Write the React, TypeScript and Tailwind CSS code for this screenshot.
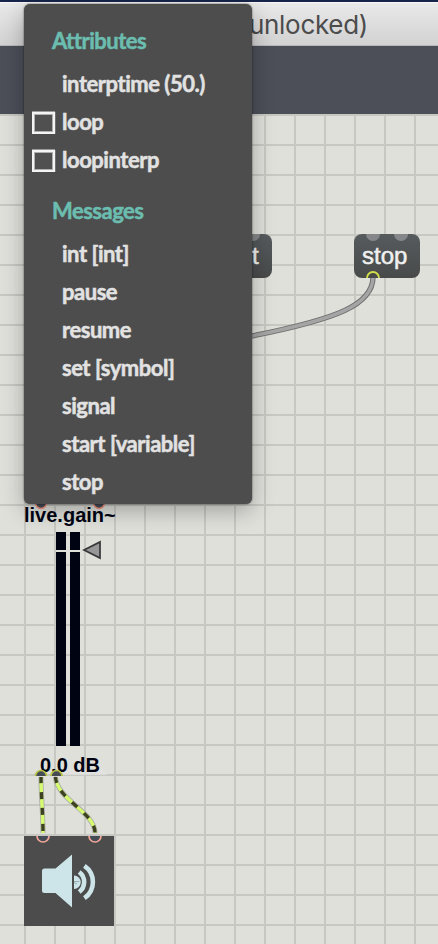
import type { ReactNode } from "react";

function Header({ children, first = false }: { children: ReactNode; first?: boolean }) {
  return (
    <h2 className={`${first ? "h-[61px] pt-[24px]" : "h-[56px] pt-[19px]"} pl-7 text-[22px] leading-[26px] font-bold tracking-[-0.5px] text-[#6bbdb0] [-webkit-text-stroke:0.5px_#6bbdb0]`}>
      {children}
    </h2>
  );
}

function Item({ label, checkbox = false }: { label: string; checkbox?: boolean }) {
  return (
    <li className="flex h-[38px] items-center text-[22px] font-bold tracking-[-0.47px] text-[#e2e2e2]">
      <span className="flex w-[38px] shrink-0 pt-px pl-2">
        {checkbox && <span className="h-[22px] w-[23px] border-2 border-[#f4f4f4] bg-[#505050] shadow-[inset_0_0_0_1px_#b0b0b0,0_-1px_0_#9a9a9a,1px_0_0_#707070]" />}
      </span>
      <span className="pb-px whitespace-nowrap [-webkit-text-stroke:0.5px_#e2e2e2]">{label}</span>
    </li>
  );
}

function Menu() {
  return (
    <nav className="absolute top-1 left-6 flex h-[500px] w-[228px] flex-col rounded-[6px] bg-[#4d4d4d] shadow-[0_7px_22px_rgba(0,0,0,0.28),0_0_2px_rgba(0,0,0,0.65)] [font-family:Lato,sans-serif]">
      <Header first>Attributes</Header>
      <ul className="flex flex-col">
        <Item label="interptime (50.)" />
        <Item label="loop" checkbox />
        <Item label="loopinterp" checkbox />
      </ul>
      <Header>Messages</Header>
      <ul className="flex flex-col">
        {["int [int]", "pause", "resume", "set [symbol]", "signal", "start [variable]", "stop"].map((m) => (
          <Item key={m} label={m} />
        ))}
      </ul>
    </nav>
  );
}

function MessageBox({ place, text }: { place: string; text: string }) {
  return (
    <div className={`absolute top-[120px] flex h-11 flex-col overflow-hidden rounded-[8px] bg-linear-to-b from-[#565b5e] to-[#484a4a] text-[24px] text-[#f0f0f0] ${place}`}>
      <div className="flex shrink-0 gap-[14px] pl-1">
        <span className="h-[7px] w-[14px] shrink-0 rounded-b-full bg-[#85878a]" />
        <span className="h-[7px] w-[14px] shrink-0 rounded-b-full bg-[#85878a]" />
      </div>
      <span className="leading-[30px] [-webkit-text-stroke:0.5px_#f0f0f0]">{text}</span>
    </div>
  );
}

function Cords() {
  return (
    <svg className="absolute top-0 left-0" width="438" height="830" viewBox="0 114 438 830" fill="none">
      <path d="M373 277C373 305 337 319 252 336" stroke="#707070" strokeWidth="5.4" />
      <path d="M373 277C373 305 337 319 252 336" stroke="#a5a5a5" strokeWidth="3.4" />
      <circle cx="373" cy="278" r="6" fill="#484a4a" stroke="#d3df49" strokeWidth="1.8" clipPath="url(#outlet)" />
      <clipPath id="outlet"><rect x="360" y="265" width="28" height="13" /></clipPath>
      <g stroke="#f29582" strokeWidth="1.5" fill="#454c57">
        <circle cx="41" cy="503" r="5.5" />
        <circle cx="99" cy="503" r="5.5" />
      </g>
      <g fill="#000311">
        <rect x="56" y="532" width="10" height="214" />
        <rect x="70" y="532" width="10" height="214" />
      </g>
      <path d="M56 551H66M70 551H80" stroke="#dfe0da" strokeWidth="2" />
      <path d="M84 550L100 542V558Z" fill="#979797" stroke="#353638" strokeWidth="1.7" />
      <path d="M62 775L67 769H103L107 775Z" fill="#e3e3e2" opacity=".7" />
    </svg>
  );
}

function AudioCords() {
  return (
    <svg className="absolute top-0 left-0" width="438" height="830" viewBox="0 114 438 830" fill="none">
      <clipPath id="gainOutlets"><rect x="32" y="765" width="40" height="11" /></clipPath>
      <g clipPath="url(#gainOutlets)" fill="#454c55" stroke="#b8c546" strokeWidth="1.7">
        <circle cx="41" cy="776" r="5.5" />
        <circle cx="56.5" cy="776" r="5.5" />
      </g>
      {["M41 777C41 796 43 813 43 833", "M55.5 777C57 800 95 812 95 833"].map((d) => (
        <g key={d}>
          <path d={d} stroke="#aaa" strokeWidth="5" />
          <path d={d} stroke="#d6fb70" strokeWidth="3.4" />
          <path d={d} stroke="#3b4121" strokeWidth="3.4" strokeDasharray="7 9" strokeDashoffset="1" />
        </g>
      ))}
      <rect x="24" y="836" width="90" height="90" fill="#4b4c4b" />
      <clipPath id="speakerInlets"><rect x="24" y="836" width="90" height="20" /></clipPath>
      <g clipPath="url(#speakerInlets)" stroke="#f3a899" strokeWidth="1.7" fill="#454c55">
        <circle cx="43" cy="836" r="6" />
        <circle cx="95" cy="836" r="6" />
      </g>
      <path d="M44.5 868.5H55.5L72 854.5V907.5L55.5 893H44.5Q42 893 42 890.5V871Q42 868.5 44.5 868.5Z" fill="#cde5e9" />
      <path d="M74 875.5A6.7 6.7 0 0 1 74 888.9Z" fill="#cde5e9" />
      <path d="M79.2 872A12.6 12.6 0 0 1 79.2 892M84.4 865.8A19.7 19.7 0 0 1 84.4 898.2" stroke="#cde5e9" strokeWidth="4.6" />
      <path d="M74 881.5H79.5M74 882.5L77 884" stroke="#8fa0a3" strokeWidth="0.8" />
    </svg>
  );
}

export default function App() {
  return (
    <div className="relative flex h-[944px] w-[438px] flex-col overflow-hidden [font-family:'Liberation_Sans',Arial,sans-serif]">
      <div className="h-[2px] shrink-0 bg-[#16244b]" />
      <header className="flex h-11 shrink-0 items-center justify-end border-t border-b border-t-[#f8f8f8] border-b-[#b8b8b8] bg-linear-to-b from-[#e9e9e9] to-[#d2d2d2] pt-[2px] pr-[70px]">
        <span className="text-[26px] leading-none tracking-[-0.3px] text-[#4c4c4c] [font-family:Inter,sans-serif]">(unlocked)</span>
      </header>
      <div className="h-[68px] shrink-0 bg-[#4c4f58]" />
      <main className="relative flex h-[830px] shrink-0 flex-col bg-[#dfe0da] bg-[linear-gradient(#c7c8c2_2px,transparent_2px),linear-gradient(90deg,#c7c8c2_2px,transparent_2px)] bg-[size:30px_30px] bg-[position:24px_0]">
        <MessageBox place="left-[210px] w-[62px] pl-[42px] [&>div]:-ml-[10px]" text="t" />
        <MessageBox place="left-[354px] w-[66px] pl-2" text="stop" />
        <Cords />
        <div className="z-10 flex flex-col pt-[390px] pl-6 text-[20px] leading-[23px] font-bold text-[#000311]">
          <span>live.gain~</span>
          <span className="pt-[227px] pl-4">0.0 dB</span>
        </div>
        <div className="absolute inset-0 z-20">
          <AudioCords />
        </div>
      </main>
      <Menu />
    </div>
  );
}
